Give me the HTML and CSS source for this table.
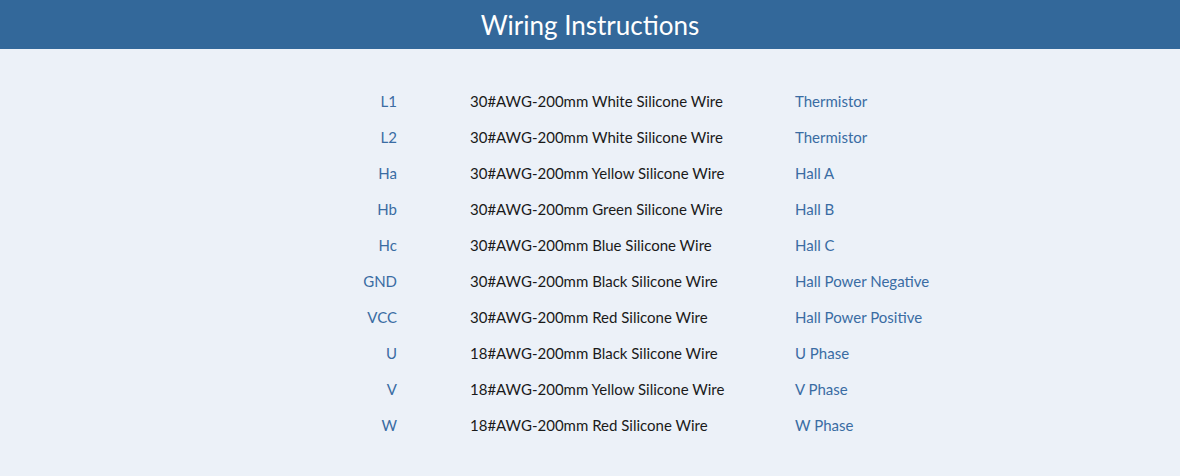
FILE: index.html
```html
<!DOCTYPE html>
<html>
<head>
<meta charset="utf-8">
<link rel="stylesheet" href="styles.css">
</head>
<body>
<header class="bar"><h1 class="title">Wiring Instructions</h1></header>
<main class="content">
  <div class="table">
    <div class="pin">L1</div><div class="wire">30#AWG-200mm White Silicone Wire</div><div class="func">Thermistor</div>
    <div class="pin">L2</div><div class="wire">30#AWG-200mm White Silicone Wire</div><div class="func">Thermistor</div>
    <div class="pin">Ha</div><div class="wire">30#AWG-200mm Yellow Silicone Wire</div><div class="func">Hall A</div>
    <div class="pin">Hb</div><div class="wire">30#AWG-200mm Green Silicone Wire</div><div class="func">Hall B</div>
    <div class="pin">Hc</div><div class="wire">30#AWG-200mm Blue Silicone Wire</div><div class="func">Hall C</div>
    <div class="pin">GND</div><div class="wire">30#AWG-200mm Black Silicone Wire</div><div class="func">Hall Power Negative</div>
    <div class="pin">VCC</div><div class="wire">30#AWG-200mm Red Silicone Wire</div><div class="func">Hall Power Positive</div>
    <div class="pin">U</div><div class="wire">18#AWG-200mm Black Silicone Wire</div><div class="func">U Phase</div>
    <div class="pin">V</div><div class="wire">18#AWG-200mm Yellow Silicone Wire</div><div class="func">V Phase</div>
    <div class="pin">W</div><div class="wire">18#AWG-200mm Red Silicone Wire</div><div class="func">W Phase</div>
  </div>
</main>
</body>
</html>
```
FILE: styles.css
```css
html, body {
  margin: 0;
  padding: 0;
}
body {
  width: 1180px;
  height: 476px;
  background: #ecf1f8;
  font-family: "Lato", "Noto Sans", sans-serif;
  overflow: hidden;
}
.bar {
  height: 49px;
  background: #33689a;
  display: flex;
  align-items: center;
  justify-content: center;
}
.title {
  margin: 0;
  color: #ffffff;
  font-weight: 400;
  font-size: 26px;
}
.content {
  padding-top: 34px;
}
.table {
  display: grid;
  grid-template-columns: 100px 252px auto;
  column-gap: 73px;
  margin-left: 297px;
  grid-auto-rows: 36px;
  font-size: 15px;
  line-height: 36px;
  white-space: nowrap;
}
.pin {
  text-align: right;
  color: #3a6ca3;
}
.wire {
  color: #1a1a1a;
}
.func {
  color: #3a6ca3;
}
```
